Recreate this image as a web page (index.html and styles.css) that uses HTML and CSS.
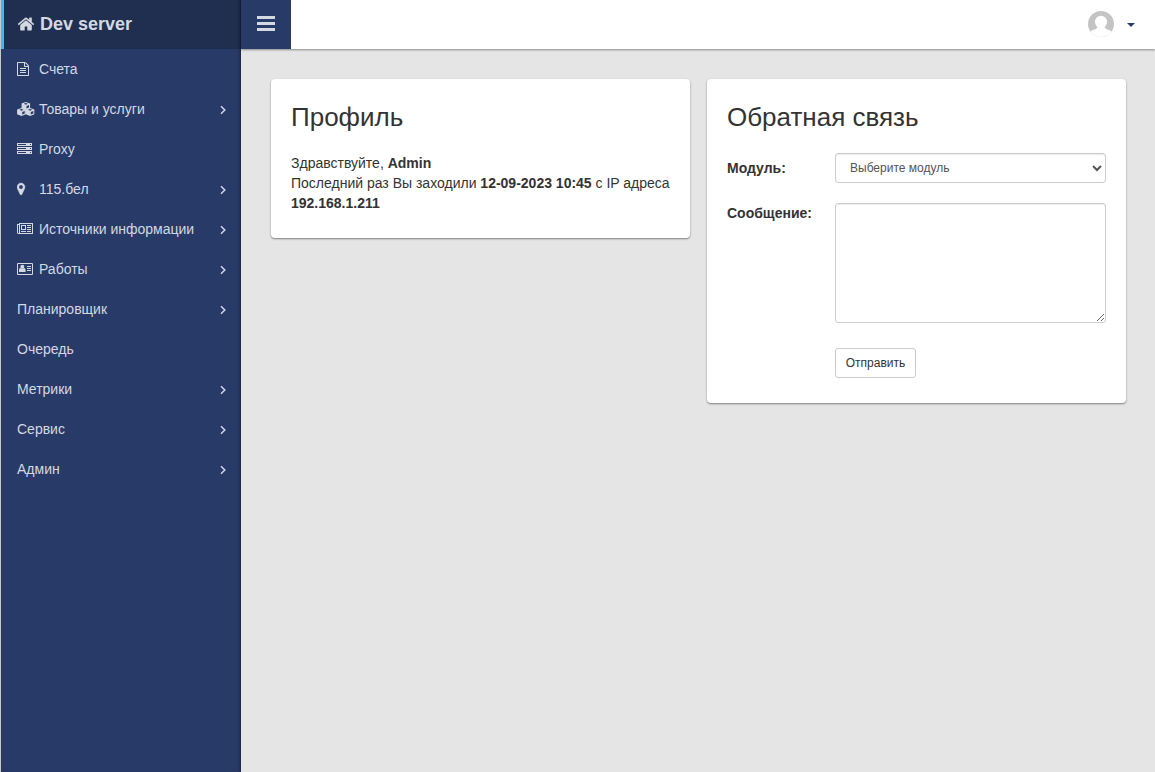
FILE: index.html
```html
<!DOCTYPE html>
<html lang="ru">
<head>
<meta charset="utf-8">
<title>Dev server</title>
<link rel="stylesheet" href="styles.css">
</head>
<body>
<svg class="defs" aria-hidden="true">
  <symbol id="chevron" viewBox="0 0 8 10"><path d="M2 1.2 5.8 5 2 8.800" fill="none" stroke="currentColor" stroke-width="1.5"/></symbol>
  <symbol id="cube" viewBox="0 0 9 8"><path fill-rule="evenodd" d="M4.500 0 8.900 1.600V6.200L4.500 8 .1 6.200V1.600ZM4.500.9 2.400 1.800 4.500 2.700 6.600 1.800ZM5.200 3.900V6.500L7.700 5.400V2.900Z"/></symbol>
</svg>
<div class="app">
  <aside class="sidebar">
    <a class="brand"><svg class="home" viewBox="0 0 1792 1792"><path d="M1472 992v480q0 26-19 45t-45 19h-384v-384h-256v384h-384q-26 0-45-19t-19-45v-480q0-1 .5-3t.5-3l575-474 575 474q1 2 1 6zm223-69l-62 74q-8 9-21 11h-3q-13 0-21-7l-692-577-692 577q-12 8-24 7-13-2-21-11l-62-74q-8-10-7-23.5t11-21.5l719-599q32-26 76-26t76 26l244 204v-195q0-14 9-23t23-9h192q14 0 23 9t9 23v408l219 182q10 8 11 21.5t-7 23.5z"/></svg><span>Dev server</span></a>
    <nav class="menu">
      <a class="item"><svg class="icon" viewBox="0 0 18 14"><path transform="translate(-1 0) scale(.0078125)" d="M1596 380q28 28 48 76t20 88v1152q0 40-28 68t-68 28h-1344q-40 0-68-28t-28-68v-1600q0-40 28-68t68-28h896q40 0 88 20t76 48zm-444-244v376h376q-10-29-22-41l-313-313q-12-12-41-22zm384 1528v-1024h-416q-40 0-68-28t-28-68v-416h-768v1536h1280zm-1024-864q0-14 9-23t23-9h704q14 0 23 9t9 23v64q0 14-9 23t-23 9h-704q-14 0-23-9t-9-23v-64zm736 224q14 0 23 9t9 23v64q0 14-9 23t-23 9h-704q-14 0-23-9t-9-23v-64q0-14 9-23t23-9h704zm0 256q14 0 23 9t9 23v64q0 14-9 23t-23 9h-704q-14 0-23-9t-9-23v-64q0-14 9-23t23-9h704z"/></svg><span>Счета</span></a>
      <a class="item"><svg class="icon" viewBox="0 0 18 14"><use href="#cube" x="4.300" y="0" width="9" height="8"/><use href="#cube" x="0" y="6" width="9" height="8"/><use href="#cube" x="8.600" y="6" width="9" height="8"/></svg><span>Товары и услуги</span><svg class="arrow"><use href="#chevron"/></svg></a>
      <a class="item"><svg class="icon" viewBox="0 0 18 14"><path fill-rule="evenodd" d="M0 1h15v3H0zM0 5h15v3H0zM0 9h15v3H0zM1 2v1h8V2zM1 6v1h8V6zM1 10v1h8v-1zM13 2v1h1V2zM13 6v1h1V6zM13 10v1h1v-1z"/></svg><span>Proxy</span></a>
      <a class="item"><svg class="icon pin" viewBox="0 0 18 14"><path transform="translate(-3 0) scale(.0078125)" d="M1152 640q0-106-75-181t-181-75-181 75-75 181 75 181 181 75 181-75 75-181zm256 0q0 109-33 179l-364 774q-16 33-47.500 52t-67.500 19-67.500-19-46.500-52l-365-774q-33-70-33-179 0-212 150-362t362-150 362 150 150 362z"/></svg><span>115.бел</span><svg class="arrow"><use href="#chevron"/></svg></a>
      <a class="item"><svg class="icon" viewBox="0 0 18 14"><path fill-rule="evenodd" d="M2 1h14v10.500q0 .5-.5.5H1.500Q0 12 0 10.500V2h2zM3 2v9h12V2zM1 3v7.500q0 .5.5.5T2 10.500V3zM4 3h5v5H4zM5 4v3h3V4zM4 9h5v1H4zM10 3h4v1h-4zM10 5h4v1h-4zM10 7h4v1h-4zM10 9h4v1h-4z"/></svg><span>Источники информации</span><svg class="arrow"><use href="#chevron"/></svg></a>
      <a class="item"><svg class="icon" viewBox="0 0 18 14"><path fill-rule="evenodd" d="M1 1h14q1 0 1 1v10q0 1-1 1H1q-1 0-1-1V2q0-1 1-1zM1 2v10h14V2zM10 4h4v1h-4zM10 6h4v1h-4zM10 8h4v1h-4z"/><circle cx="5.300" cy="4.800" r="2"/><path d="M2 10V8q0-1.900 1.600-2Q5.300 7.200 7 6 8.600 6.200 8.600 8v2z"/></svg><span>Работы</span><svg class="arrow"><use href="#chevron"/></svg></a>
      <a class="item"><span>Планировщик</span><svg class="arrow"><use href="#chevron"/></svg></a>
      <a class="item"><span>Очередь</span></a>
      <a class="item"><span>Метрики</span><svg class="arrow"><use href="#chevron"/></svg></a>
      <a class="item"><span>Сервис</span><svg class="arrow"><use href="#chevron"/></svg></a>
      <a class="item"><span>Админ</span><svg class="arrow"><use href="#chevron"/></svg></a>
    </nav>
  </aside>
  <div class="page">
    <header class="topbar">
      <button class="toggle" aria-label="Меню"><i></i><i></i><i></i></button>
      <div class="user"><svg class="avatar" viewBox="0 0 26 26"><defs><clipPath id="round"><circle cx="13" cy="13" r="13"/></clipPath></defs><g clip-path="url(#round)"><path fill="#c4c4c4" d="M0 0h26v26H0z"/><ellipse cx="13" cy="11" rx="6" ry="6.300" fill="#fff"/><path fill="#fff" d="M9.500 14h7v2.500q1 1.500 4.500 2.500 2 .7 3 2v5H2v-5q1-1.300 3-2 3.500-1 4.500-2.500z"/></g></svg><span class="caret"></span></div>
    </header>
    <main class="content">
      <section class="card profile">
        <h2>Профиль</h2>
        <p>Здравствуйте, <b>Admin</b><br>Последний раз Вы заходили <b>12-09-2023 10:45</b> с IP адреса <b>192.168.1.211</b></p>
      </section>
      <section class="card feedback">
        <h2>Обратная связь</h2>
        <form class="form">
          <label for="module">Модуль:</label>
          <select id="module"><option>Выберите модуль</option></select>
          <label for="message">Сообщение:</label>
          <textarea id="message"></textarea>
          <button class="send" type="button">Отправить</button>
        </form>
      </section>
    </main>
  </div>
</div>
</body>
</html>
```
FILE: styles.css
```css
* { box-sizing: border-box; }
body { margin: 0; background: #e5e5e5; color: #333; font: 14px/20px "Liberation Sans", Arial, sans-serif; }
.defs { position: absolute; width: 0; height: 0; }
.app { display: flex; height: 772px; border-left: 1px solid #c8c8c8; overflow: hidden; }
.sidebar { width: 240px; flex: none; background: #283b68; color: #d4d8e1; box-shadow: inset -3px 0 3px -2px #17223e; }
.brand { display: flex; align-items: center; height: 49px; padding: 0 0 2px 13px; border-left: 3px solid #3fb8f5; background: #202f50; box-shadow: inset -3px 0 3px -2px #111a2e; font-size: 18px; font-weight: bold; }
.home { width: 18px; height: 18px; margin-right: 5px; fill: currentColor; }
.menu { display: flex; flex-direction: column; }
.item { display: flex; align-items: center; height: 40px; padding: 0 14px 0 16px; }
.icon { width: 18px; height: 14px; margin-right: 4px; fill: currentColor; }
.pin { stroke: currentColor; stroke-width: 40; }
.arrow { width: 8px; height: 10px; margin: 2px 0 0 auto; }
.page { flex: 1; }
.topbar { display: flex; justify-content: space-between; height: 49px; background: #fff; box-shadow: 0 1px 2px rgba(0,0,0,.4); }
.toggle { display: flex; flex-direction: column; align-items: center; gap: 3px; width: 50px; padding: 16px 0 0; border: 0; background: #283b68; }
.toggle i { width: 18px; height: 3px; background: #d4d8e1; }
.user { display: flex; gap: 13px; padding: 11px 20px 0 0; }
.avatar { width: 26px; height: 26px; }
.caret { margin-top: 12px; width: 8px; height: 4px; border: 4px solid transparent; border-top-color: #283b68; border-bottom: 0; }
.content { display: flex; align-items: flex-start; gap: 17px; padding: 30px 29px 0 30px; }
.card { flex: 1; background: #fff; border-radius: 4px; padding: 20px; box-shadow: 0 1px 2px rgba(0,0,0,.45); }
.profile { height: 159px; }
.feedback { height: 324px; }
h2 { margin: 3px 0 21px; font-size: 26px; line-height: 30px; font-weight: normal; }
p { margin: 0; }
.form { display: grid; grid-template-columns: 108px 1fr; row-gap: 20px; }
label { padding-top: 5px; font-weight: bold; }
label[for="message"] { padding-top: 0; }
select, textarea { width: 100%; margin: 0; border: 1px solid #ccc; border-radius: 3px; background: #fff; color: #555; font: 12px/18px "Liberation Sans", Arial, sans-serif; box-shadow: inset 0 1px 1px rgba(0,0,0,.075); }
select { height: 30px; padding: 5px 10px; }
textarea { height: 120px; resize: vertical; }
.send { grid-column: 2; justify-self: start; margin-top: 5px; width: 81px; height: 30px; padding: 0; border: 1px solid #ccc; border-radius: 3px; background: #fff; color: #333; font: 12px/18px "Liberation Sans", Arial, sans-serif; }
```
